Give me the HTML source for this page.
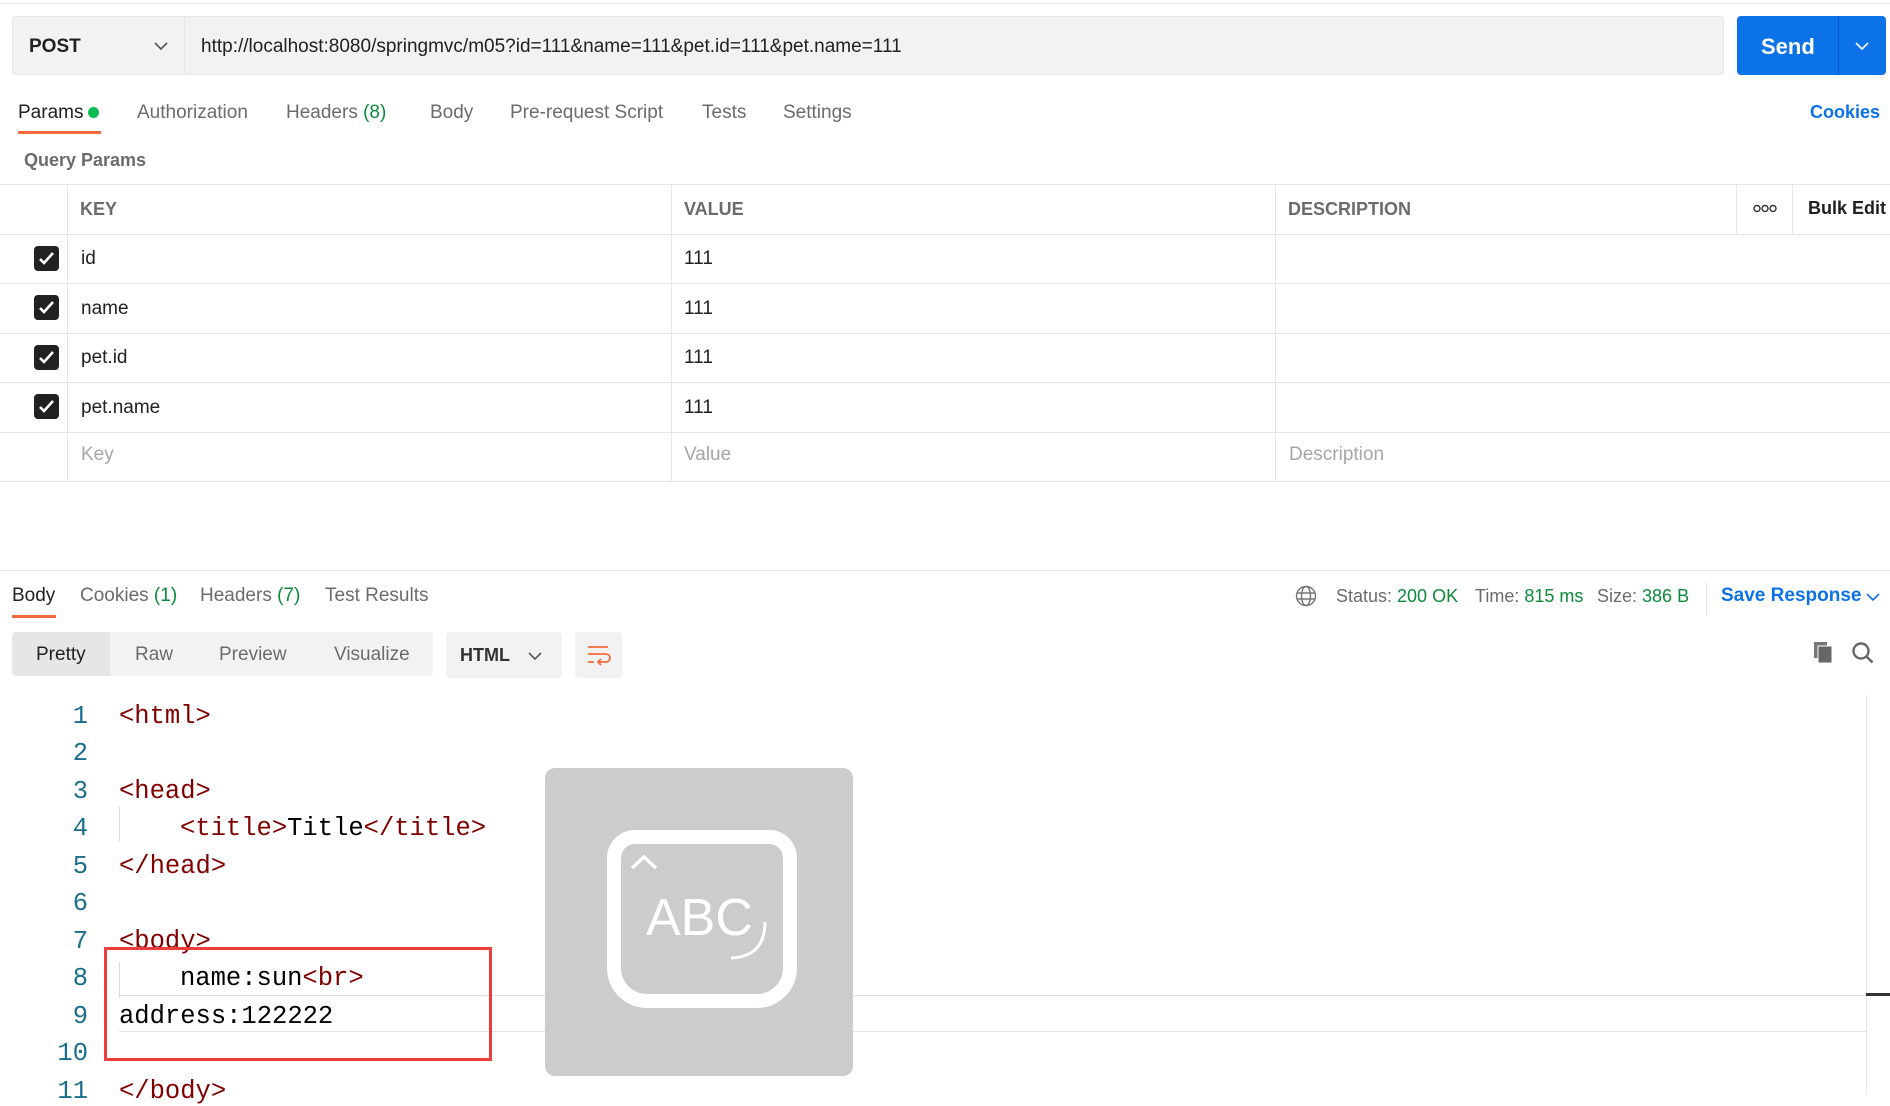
<!DOCTYPE html>
<html><head><meta charset="utf-8"><style>
*{margin:0;padding:0;box-sizing:border-box}
body{width:1890px;height:1095px;overflow:hidden;background:#fff;font-family:"Liberation Sans",sans-serif;color:#212121;position:relative}
.a{position:absolute;white-space:nowrap}
.g{color:#0b8a3a}
.hl{position:absolute;height:1px;background:#e6e6e6}
.vl{position:absolute;width:1px;background:#e6e6e6}
.cb{position:absolute;left:34px;width:25px;height:25px;background:#212121;border-radius:4px}
.cb svg{position:absolute;left:3px;top:3px}
.t{font-size:19px;color:#212121}
.ph{font-size:19px;color:#a6a6a6}
.code{font-family:"Liberation Mono",monospace;font-size:25.5px;color:#000}
.ln{position:absolute;width:88px;text-align:right;font-family:"Liberation Mono",monospace;font-size:25.5px;color:#1b6d8c}
.tag{color:#800000}
</style></head><body>
<div class="hl" style="left:0;top:3px;width:1890px"></div>
<div class="a" style="left:12px;top:16px;width:1712px;height:59px;background:#f2f2f2;border:1px solid #e6e6e6;border-radius:4px"></div>
<div class="vl" style="left:184px;top:16px;height:59px"></div>
<div class="a" style="left:29px;top:36px;font-size:19px;font-weight:bold;color:#212121">POST</div>
<svg class="a" style="left:154px;top:41px" width="14" height="10"><path d="M1 2l6 6 6-6" stroke="#555" stroke-width="1.6" fill="none"/></svg>
<div class="a" style="left:201px;top:36px;font-size:19px;color:#212121">http://localhost:8080/springmvc/m05?id=111&amp;name=111&amp;pet.id=111&amp;pet.name=111</div>
<div class="a" style="left:1737px;top:16px;width:149px;height:59px;background:#0c72e8;border-radius:4px"></div>
<div class="a" style="left:1838px;top:16px;width:1px;height:59px;background:#0a5fc4"></div>
<div class="a" style="left:1761px;top:34px;font-size:22px;font-weight:bold;color:#fff">Send</div>
<svg class="a" style="left:1855px;top:41px" width="14" height="10"><path d="M1 2l6 6 6-6" stroke="#fff" stroke-width="1.6" fill="none"/></svg>
<div class="a" style="left:18px;top:102px;font-size:19px;color:#212121">Params</div>
<div class="a" style="left:88px;top:107px;width:11px;height:11px;border-radius:50%;background:#0cbb52"></div>
<div class="a" style="left:18px;top:131px;width:83px;height:3px;background:#f26b3a"></div>
<div class="a" style="left:137px;top:102px;font-size:19px;color:#6b6b6b">Authorization</div>
<div class="a" style="left:286px;top:102px;font-size:19px;color:#6b6b6b">Headers <span class="g">(8)</span></div>
<div class="a" style="left:430px;top:102px;font-size:19px;color:#6b6b6b">Body</div>
<div class="a" style="left:510px;top:102px;font-size:19px;color:#6b6b6b">Pre-request Script</div>
<div class="a" style="left:702px;top:102px;font-size:19px;color:#6b6b6b">Tests</div>
<div class="a" style="left:783px;top:102px;font-size:19px;color:#6b6b6b">Settings</div>
<div class="a" style="left:1810px;top:102px;font-size:18px;font-weight:bold;color:#0c72e8">Cookies</div>
<div class="a" style="left:24px;top:150px;font-size:18px;font-weight:bold;color:#6b6b6b">Query Params</div>
<div class="hl" style="left:0;top:184px;width:1890px"></div>
<div class="hl" style="left:0;top:234px;width:1890px"></div>
<div class="hl" style="left:0;top:283px;width:1890px"></div>
<div class="hl" style="left:0;top:333px;width:1890px"></div>
<div class="hl" style="left:0;top:382px;width:1890px"></div>
<div class="hl" style="left:0;top:432px;width:1890px"></div>
<div class="hl" style="left:0;top:481px;width:1890px"></div>
<div class="vl" style="left:67px;top:184px;height:297px"></div>
<div class="vl" style="left:671px;top:184px;height:297px"></div>
<div class="vl" style="left:1275px;top:184px;height:297px"></div>
<div class="vl" style="left:1736px;top:184px;height:50px"></div>
<div class="vl" style="left:1792px;top:184px;height:50px"></div>
<div class="a" style="left:80px;top:199px;font-size:18px;font-weight:bold;color:#6b6b6b">KEY</div>
<div class="a" style="left:684px;top:199px;font-size:18px;font-weight:bold;color:#6b6b6b">VALUE</div>
<div class="a" style="left:1288px;top:199px;font-size:18px;font-weight:bold;color:#6b6b6b">DESCRIPTION</div>
<svg class="a" style="left:1753px;top:204px" width="24" height="9"><circle cx="4" cy="4.5" r="3" stroke="#333" stroke-width="1.4" fill="none"/><circle cx="12" cy="4.5" r="3" stroke="#333" stroke-width="1.4" fill="none"/><circle cx="20" cy="4.5" r="3" stroke="#333" stroke-width="1.4" fill="none"/></svg>
<div class="a" style="left:1808px;top:198px;font-size:18px;font-weight:bold;color:#212121">Bulk Edit</div>
<div class="cb" style="top:246px"><svg width="19" height="19"><path d="M3 10l4 4 9-10" stroke="#fff" stroke-width="2.6" fill="none"/></svg></div>
<div class="cb" style="top:295px"><svg width="19" height="19"><path d="M3 10l4 4 9-10" stroke="#fff" stroke-width="2.6" fill="none"/></svg></div>
<div class="cb" style="top:345px"><svg width="19" height="19"><path d="M3 10l4 4 9-10" stroke="#fff" stroke-width="2.6" fill="none"/></svg></div>
<div class="cb" style="top:394px"><svg width="19" height="19"><path d="M3 10l4 4 9-10" stroke="#fff" stroke-width="2.6" fill="none"/></svg></div>
<div class="a t" style="left:81px;top:248px">id</div><div class="a t" style="left:684px;top:248px">111</div>
<div class="a t" style="left:81px;top:298px">name</div><div class="a t" style="left:684px;top:298px">111</div>
<div class="a t" style="left:81px;top:347px">pet.id</div><div class="a t" style="left:684px;top:347px">111</div>
<div class="a t" style="left:81px;top:397px">pet.name</div><div class="a t" style="left:684px;top:397px">111</div>
<div class="a ph" style="left:81px;top:444px">Key</div><div class="a ph" style="left:684px;top:444px">Value</div><div class="a ph" style="left:1289px;top:444px">Description</div>
<div class="hl" style="left:0;top:570px;width:1890px"></div>
<div class="a" style="left:12px;top:585px;font-size:19px;color:#212121">Body</div>
<div class="a" style="left:12px;top:615px;width:44px;height:3px;background:#f26b3a"></div>
<div class="a" style="left:80px;top:585px;font-size:19px;color:#6b6b6b">Cookies <span class="g">(1)</span></div>
<div class="a" style="left:200px;top:585px;font-size:19px;color:#6b6b6b">Headers <span class="g">(7)</span></div>
<div class="a" style="left:325px;top:585px;font-size:19px;color:#6b6b6b">Test Results</div>
<svg class="a" style="left:1295px;top:585px" width="22" height="22"><circle cx="11" cy="11" r="9.5" stroke="#777" stroke-width="1.4" fill="none"/><ellipse cx="11" cy="11" rx="4.5" ry="9.5" stroke="#777" stroke-width="1.4" fill="none"/><path d="M2 8h18M2 14h18" stroke="#777" stroke-width="1.4"/></svg>
<div class="a" style="left:1336px;top:586px;font-size:18px;color:#6b6b6b">Status: <span class="g">200 OK</span></div>
<div class="a" style="left:1475px;top:586px;font-size:18px;color:#6b6b6b">Time: <span class="g">815 ms</span></div>
<div class="a" style="left:1597px;top:586px;font-size:18px;color:#6b6b6b">Size: <span class="g">386 B</span></div>
<div class="vl" style="left:1706px;top:582px;height:34px"></div>
<div class="a" style="left:1721px;top:585px;font-size:19px;font-weight:bold;color:#0c72e8">Save Response</div>
<svg class="a" style="left:1866px;top:592px" width="14" height="10"><path d="M1 2l6 6 6-6" stroke="#0c72e8" stroke-width="1.6" fill="none"/></svg>
<div class="a" style="left:12px;top:632px;width:421px;height:44px;background:#f2f2f2;border-radius:4px"></div>
<div class="a" style="left:12px;top:632px;width:98px;height:44px;background:#e6e6e6;border-radius:4px 0 0 4px"></div>
<div class="a" style="left:36px;top:644px;font-size:19px;color:#212121">Pretty</div>
<div class="a" style="left:135px;top:644px;font-size:19px;color:#6b6b6b">Raw</div>
<div class="a" style="left:219px;top:644px;font-size:19px;color:#6b6b6b">Preview</div>
<div class="a" style="left:334px;top:644px;font-size:19px;color:#6b6b6b">Visualize</div>
<div class="a" style="left:446px;top:632px;width:116px;height:46px;background:#f2f2f2;border-radius:4px"></div>
<div class="a" style="left:460px;top:645px;font-size:18px;font-weight:bold;color:#333">HTML</div>
<svg class="a" style="left:528px;top:651px" width="14" height="10"><path d="M1 2l6 6 6-6" stroke="#555" stroke-width="1.6" fill="none"/></svg>
<div class="a" style="left:575px;top:632px;width:47px;height:46px;background:#f2f2f2;border-radius:4px"></div>
<svg class="a" style="left:586px;top:643px" width="26" height="24"><path d="M2 4h20M2 11h18a4 4 0 0 1 0 8h-8M15 16l-3 3 3 3M2 19h6" stroke="#f26b3a" stroke-width="1.8" fill="none"/></svg>
<svg class="a" style="left:1812px;top:640px" width="22" height="24"><rect x="2" y="2" width="13" height="16" fill="#777"/><rect x="6" y="6" width="14" height="17" fill="#666" stroke="#fff" stroke-width="1"/></svg>
<svg class="a" style="left:1851px;top:641px" width="24" height="24"><circle cx="10" cy="10" r="7.5" stroke="#666" stroke-width="2.4" fill="none"/><path d="M15.5 15.5l6 6" stroke="#666" stroke-width="2.6"/></svg>
<div class="vl" style="left:1866px;top:695px;height:400px"></div>
<div class="a" style="left:1866px;top:993px;width:24px;height:3px;background:#333"></div>
<div class="hl" style="left:119px;top:995px;width:1747px;background:#e2e2e2"></div>
<div class="hl" style="left:119px;top:1031px;width:1747px;background:#e2e2e2"></div>
<div class="vl" style="left:119px;top:806px;height:36px;background:#ddd"></div>
<div class="vl" style="left:119px;top:962px;height:36px;background:#ddd"></div>
<div class="ln" style="left:0;top:702px">1</div><div class="a code" style="left:119px;top:702px"><span class="tag">&lt;html&gt;</span></div>
<div class="ln" style="left:0;top:739px">2</div>
<div class="ln" style="left:0;top:777px">3</div><div class="a code" style="left:119px;top:777px"><span class="tag">&lt;head&gt;</span></div>
<div class="ln" style="left:0;top:814px">4</div><div class="a code" style="left:180px;top:814px"><span class="tag">&lt;title&gt;</span>Title<span class="tag">&lt;/title&gt;</span></div>
<div class="ln" style="left:0;top:852px">5</div><div class="a code" style="left:119px;top:852px"><span class="tag">&lt;/head&gt;</span></div>
<div class="ln" style="left:0;top:889px">6</div>
<div class="ln" style="left:0;top:927px">7</div><div class="a code" style="left:119px;top:927px"><span class="tag">&lt;body&gt;</span></div>
<div class="ln" style="left:0;top:964px">8</div><div class="a code" style="left:180px;top:964px">name:sun<span class="tag">&lt;br&gt;</span></div>
<div class="ln" style="left:0;top:1002px">9</div><div class="a code" style="left:119px;top:1002px">address:122222</div>
<div class="ln" style="left:0;top:1039px">10</div>
<div class="ln" style="left:0;top:1077px">11</div><div class="a code" style="left:119px;top:1077px"><span class="tag">&lt;/body&gt;</span></div>
<div class="a" style="left:104px;top:947px;width:388px;height:114px;border:3px solid #ee3b3b"></div>
<div class="a" style="left:545px;top:768px;width:308px;height:308px;background:#cccccc;border-radius:10px"></div>
<div class="a" style="left:607px;top:830px;width:190px;height:178px;border:14px solid #fff;border-radius:28px 28px 40px 40px"></div>
<svg class="a" style="left:628px;top:850px" width="150" height="140"><path d="M4 18l12-11 12 11" stroke="#fff" stroke-width="3.5" fill="none"/><path d="M137 72c0 24-12 35-34 36" stroke="#fff" stroke-width="3" fill="none"/></svg>
<div class="a" style="left:646px;top:888px;font-size:52px;color:#fff;font-family:'Liberation Sans',sans-serif">ABC</div>
</body></html>
